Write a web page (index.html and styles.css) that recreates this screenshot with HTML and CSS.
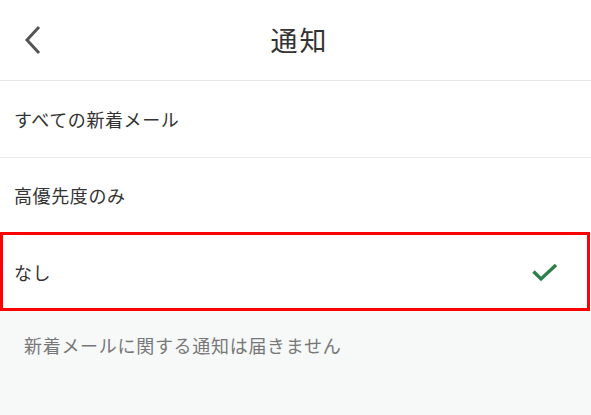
FILE: index.html
```html
<!DOCTYPE html>
<html lang="ja">
<head>
<meta charset="utf-8">
<link rel="stylesheet" href="styles.css">
</head>
<body>
<div class="screen">
  <header class="header">
    <button class="back" aria-label="戻る">
      <svg width="20" height="30" viewBox="0 0 20 30"><path d="M14 3 L3 15 L14 27" fill="none" stroke="#555" stroke-width="3" stroke-linecap="square"/></svg>
    </button>
    <h1 class="title">通知</h1>
  </header>
  <ul class="options">
    <li class="option first">すべての新着メール</li>
    <li class="option second">高優先度のみ</li>
    <li class="option selected">
      <span>なし</span>
      <svg class="check" width="28" height="22" viewBox="0 0 28 22"><path d="M2.5 9.5 L10 17 L25 3" fill="none" stroke="#2a8048" stroke-width="3.4" stroke-linecap="butt"/></svg>
    </li>
  </ul>
  <div class="note">新着メールに関する通知は届きません</div>
</div>
</body>
</html>
```

FILE: styles.css
```css
* { box-sizing: border-box; }
html, body {
  margin: 0;
  padding: 0;
  background: #fff;
  font-family: "Noto Sans CJK JP", "Noto Sans", sans-serif;
}
.screen {
  width: 591px;
  height: 415px;
  display: flex;
  flex-direction: column;
  overflow: hidden;
}
.header {
  height: 81px;
  border-bottom: 1px solid #e6e6e6;
  display: flex;
  align-items: center;
  justify-content: center;
  position: relative;
}
.back {
  position: absolute;
  left: 24px;
  top: 25px;
  padding: 0;
  border: none;
  background: none;
  display: flex;
}
.title {
  margin: 0;
  font-size: 27px;
  font-weight: 400;
  color: #333;
  line-height: 1;
  margin-top: -2px;
  letter-spacing: 2px;
  padding-left: 8px;
}
.options {
  list-style: none;
  margin: 0;
  padding: 0;
}
.option {
  display: flex;
  align-items: center;
  justify-content: space-between;
  padding: 0 14px;
  font-size: 18px;
  letter-spacing: 0.6px;
  color: #333;
}
.first {
  height: 77px;
  border-bottom: 1px solid #ececec;
}
.second {
  height: 74px;
}
.selected {
  height: 79px;
  border: 3px solid #ff0000;
  margin-right: 1px;
  padding-left: 11px;
  padding-right: 28px;
}
.check { display: block; margin-top: 2px; }
.note {
  flex: 1;
  background: #f7f9f9;
  color: #777;
  font-size: 18px;
  letter-spacing: 0.7px;
  padding: 21px 0 0 24px;
}
```
